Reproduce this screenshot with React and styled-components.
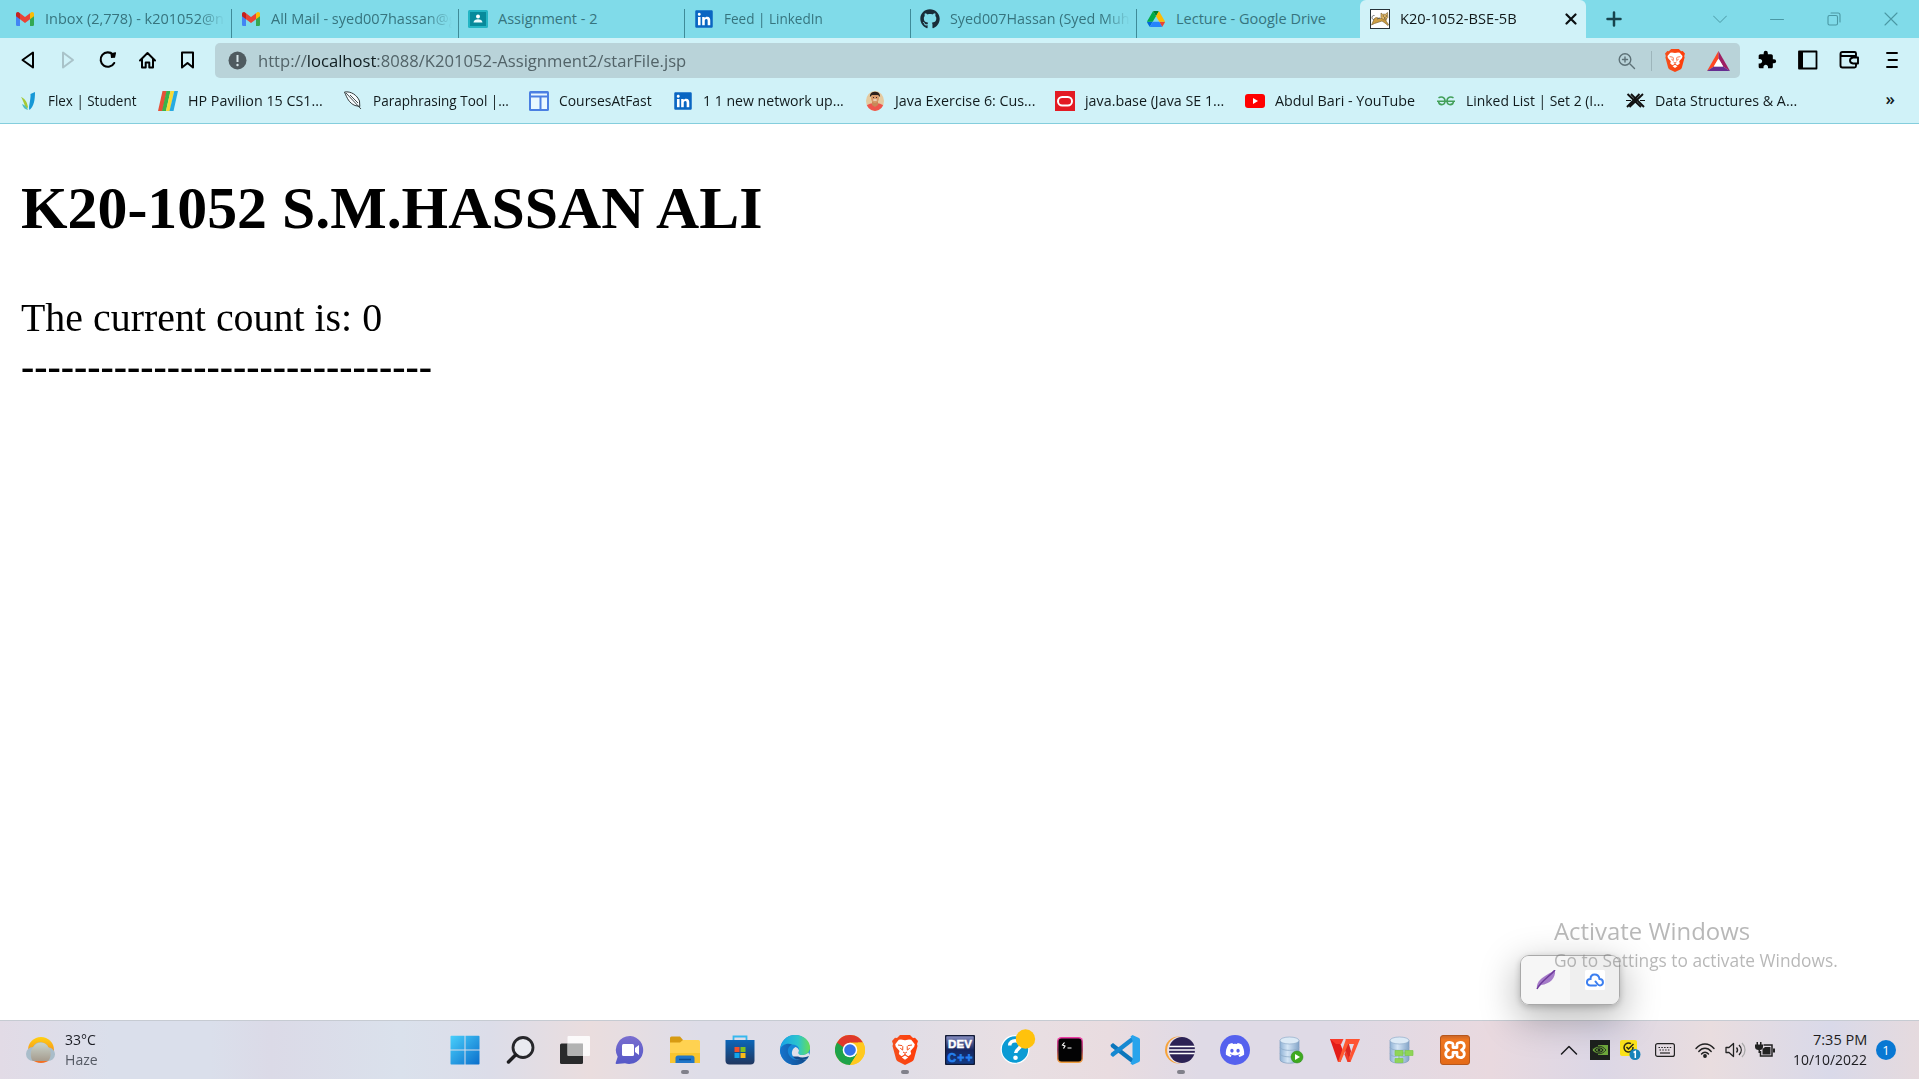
import React, { useLayoutEffect, useRef, useState } from 'react';
import styled, { createGlobalStyle } from 'styled-components';
import { FaGithub, FaLinkedin, FaDiscord } from 'react-icons/fa';
import { MdExtension } from 'react-icons/md';

const Global = createGlobalStyle`
  * { box-sizing: border-box; }
  body { margin: 0; background: #fff; overflow: hidden; }
  svg { display: block; flex: none; }
`;

const Screen = styled.div`
  width: 1919px;
  height: 1079px;
  display: flex;
  flex-direction: column;
  position: relative;
  font-family: "Open Sans", "Noto Sans", sans-serif;
  overflow: hidden;
`;

/* ---------- text condensed to a set width ---------- */
const FitBox = styled.span`
  display: block;
  width: ${(p) => p.$w}px;
  white-space: pre;
`;
const FitText = styled.span`
  display: inline-block;
  transform-origin: 0 50%;
`;

function Fit({ w, children }) {
  const ref = useRef(null);
  const [scale, setScale] = useState(1);
  useLayoutEffect(() => {
    setScale(w / ref.current.offsetWidth);
  }, [w]);
  return <FitBox $w={w}><FitText ref={ref} style={{ transform: `scaleX(${scale})` }}>{children}</FitText></FitBox>;
}

/* ---------- tab strip ---------- */
const TabStrip = styled.div`
  height: 38px;
  flex: none;
  display: flex;
  background: #80dbe9;
  padding-left: 5px;
`;
const Tab = styled.div`
  width: ${(p) => p.$w || 226}px;
  height: 38px;
  display: flex;
  align-items: center;
  padding: 0 ${(p) => (p.$active ? 9 : 4)}px 0 10px;
  background: ${(p) => (p.$active ? '#d0f2f8' : 'transparent')};
  border-radius: ${(p) => (p.$active ? '6px 6px 0 0' : 0)};
  color: ${(p) => (p.$active ? '#101718' : '#36747e')};
  font-size: 14.5px;
  line-height: 20px;
`;
const TabIcon = styled.div`
  width: 20px;
  margin-right: 10px;
  display: flex;
  justify-content: center;
  flex: none;
`;
const TabTitle = styled.div`
  flex: 1;
  overflow: hidden;
  ${(p) => p.$fade && 'mask-image: linear-gradient(90deg, #000 calc(100% - 28px), transparent calc(100% - 2px));'}
`;
const TabRule = styled.div`
  width: 1px;
  height: 29px;
  align-self: flex-end;
  background: #3f8b98;
  margin-right: -1px;
`;
const WindowControls = styled.div`
  display: flex;
  align-items: center;
  flex: 1;
  padding: 0 21px 1px 20px;
  color: #4a98a4;
  justify-content: space-between;
`;
const ControlGroup = styled.div`
  display: flex;
  align-items: center;
  gap: 43px;
`;

/* ---------- toolbar ---------- */
const Toolbar = styled.div`
  height: 43px;
  flex: none;
  display: flex;
  align-items: center;
  background: #d0f2f8;
  padding: 2px 17px 0 18px;
`;
const NavButtons = styled.div`
  display: flex;
  gap: 20px;
  width: 197px;
  padding-bottom: 1px;
`;
const AddressBar = styled.div`
  width: 1525px;
  height: 35px;
  border-radius: 5px;
  background: #b9d3d9;
  display: flex;
  align-items: center;
  padding: 0 10px 0 13px;
  color: #526368;
  font-size: 17px;
`;
const Url = styled.div`
  flex: 1;
  padding-left: 11px;
  b { font-weight: 400; color: #101d20; }
`;
const BarRule = styled.div`
  width: 1px;
  height: 20px;
  background: #9db5bb;
  margin: 0 13px 0 15px;
`;
const Extensions = styled.div`
  display: flex;
  align-items: center;
  flex: 1;
  gap: 21px;
  padding: 0 0 1px 17px;
`;

/* ---------- bookmarks ---------- */
const Bookmarks = styled.div`
  height: 43px;
  flex: none;
  display: flex;
  align-items: center;
  background: #d0f2f8;
  border-bottom: 1px solid #84cedd;
  padding: 0 24px 3px 18px;
  color: #111b1d;
  font-size: 14.5px;
`;
const Bookmark = styled.div`
  width: ${(p) => p.$w}px;
  display: flex;
  align-items: center;
  gap: 10px;
`;
const BookmarkIcon = styled.div`
  width: 20px;
  display: flex;
  justify-content: center;
  flex: none;
`;
const More = styled.div`
  margin-left: auto;
  font-size: 17px;
  font-weight: 600;
  line-height: 18px;
  padding-bottom: 3px;
`;

/* ---------- page ---------- */
const Page = styled.main`
  flex: 1;
  padding: 0 21px;
  font-family: "Liberation Serif", "Times New Roman", serif;
  font-size: 40px;
  line-height: 49px;
  color: #000;
`;
const Heading = styled.h2`
  font-size: 60px;
  line-height: 70px;
  margin: 49px 0 50px;
`;
const Line = styled.div`
  font-weight: ${(p) => (p.$bold ? 700 : 400)};
`;
const Popup = styled.div`
  position: absolute;
  left: 1520px;
  top: 955px;
  width: 100px;
  height: 50px;
  display: flex;
  border: 1px solid #a9a9a9;
  border-radius: 9px;
  overflow: hidden;
  background: #efefef;
`;
const PopupShadow = styled.div`
  position: absolute;
  left: 1520px;
  top: 955px;
  width: 100px;
  height: 50px;
  border-radius: 9px;
  box-shadow: 0 12px 36px 4px rgba(0, 0, 0, 0.26), 0 2px 6px rgba(0, 0, 0, 0.2);
`;
const PopupCell = styled.div`
  flex: 1;
  display: flex;
  align-items: center;
  justify-content: center;
  background: ${(p) => (p.$light ? '#f6f6f6' : '#efefef')};
`;
const Watermark = styled.div`
  position: absolute;
  left: 1554px;
  top: 914px;
  color: rgba(125, 125, 125, 0.55);
  display: flex;
  flex-direction: column;
`;
const WatermarkTitle = styled.div`
  font-size: 24.5px;
  line-height: 34px;
`;
const WatermarkNote = styled.div`
  font-size: 17.5px;
  line-height: 26px;
  margin-top: -1px;
`;

/* ---------- taskbar ---------- */
const Taskbar = styled.footer`
  height: 59px;
  flex: none;
  display: flex;
  align-items: center;
  border-top: 1px solid #c6cbd2;
  background: linear-gradient(90deg, #e2dbe6 0, #dadfeb 110px, #dadfeb 210px, #dbdae7 270px, #dae1ec 400px,
    #dcdde9 490px, #eaddde 590px, #dedde8 700px, #dfdde7 880px, #e8dfe3 1010px, #e9dce0 1110px,
    #dfdae6 1200px, #dfdae6 1330px, #e9d9df 1490px, #dcd7e6 1600px, #e9dddf 1710px, #d9d9e9 1830px, #e5dade 1919px);
`;
const Weather = styled.div`
  width: 437px;
  padding-left: 26px;
  display: flex;
  align-items: center;
  gap: 10px;
  font-size: 14.5px;
  line-height: 20px;
  color: #1b1d24;
`;
const Stack = styled.div`
  display: flex;
  flex-direction: column;
  align-items: ${(p) => (p.$end ? 'flex-end' : 'flex-start')};
`;
const Muted = styled.span`
  color: #555a64;
`;
const Apps = styled.div`
  display: flex;
  height: 58px;
`;
const AppSlot = styled.div`
  width: 55.05px;
  display: flex;
  align-items: center;
  justify-content: center;
  position: relative;
`;
const Running = styled.span`
  position: absolute;
  left: 24px;
  bottom: 5px;
  width: 8px;
  height: 4px;
  border-radius: 2px;
  background: #80808a;
`;
const Tray = styled.div`
  flex: 1;
  display: flex;
  align-items: center;
  padding: 0 23px 0 77px;
  font-size: 14.5px;
  line-height: 20px;
  color: #1c1c20;
`;
const TrayIcons = styled.div`
  display: grid;
  grid-template-columns: 30px 30px 35px 40px 30px 30px 20px;
  align-items: center;
  width: 215px;
`;
const Clock = styled.div`
  flex: 1;
  display: flex;
  justify-content: flex-end;
  margin-right: 9px;
`;
const Badge = styled.div`
  width: 20px;
  height: 20px;
  border-radius: 50%;
  background: #0878d3;
  color: #fff;
  font-size: 13px;
  display: flex;
  align-items: center;
  justify-content: center;
`;

/* ---------- drawings ---------- */
const Gmail = () => (
  <svg width="18" height="14" viewBox="0 0 18 14">
    <path d="M0 2v10.800A1.200 1.200 0 0 0 1.200 14H4V5.500z" fill="#4285f4" />
    <path d="M18 2v10.800a1.200 1.200 0 0 1-1.200 1.200H14V5.500z" fill="#34a853" />
    <path d="M14 1.200 15 .5C16.400 -.4 18 .4 18 2v2.200L14 7.300z" fill="#fbbc04" />
    <path d="M4 1.200 9 5l5-3.800v6.100L9 11 4 7.300z" fill="#ea4335" />
    <path d="M0 2C0 .4 1.600-.4 3 .5l1 .7v6.100L0 4.200z" fill="#c5221f" />
  </svg>
);
const Classroom = () => (
  <svg width="20" height="18" viewBox="0 0 20 18">
    <rect width="20" height="18" rx="1.500" fill="#23b5c4" />
    <rect x="2" y="2" width="16" height="14" fill="#078a9b" />
    <circle cx="10" cy="6.500" r="2" fill="#fff" />
    <path d="M5.500 12.500c0-4.500 9-4.500 9 0z" fill="#e8fbfd" />
  </svg>
);
const InBox = styled.div`
  width: 18px;
  height: 18px;
  background: linear-gradient(#fff, #fff) center / 13px 13px no-repeat;
  svg { width: 20px; height: 20px; margin: -1px; color: #0a66c2; }
`;
const LinkedIn = () => <InBox><FaLinkedin /></InBox>;
const Drive = () => (
  <svg width="18" height="16" viewBox="0 0 87.300 78">
    <path d="m6.600 66.850 3.850 6.650c.8 1.400 1.950 2.500 3.300 3.300l13.750-23.800H0c0 1.550.4 3.100 1.200 4.500z" fill="#0066da" />
    <path d="M43.650 25 29.900 1.200c-1.350.8-2.500 1.900-3.300 3.300L1.200 48.500A9 9 0 0 0 0 53h27.500z" fill="#00ac47" />
    <path d="M73.550 76.800c1.350-.8 2.500-1.900 3.300-3.300l9.250-16c.8-1.400 1.200-2.950 1.200-4.500H59.800l5.850 11.500z" fill="#ea4335" />
    <path d="M43.650 25 57.400 1.200C56.050.4 54.500 0 52.900 0H34.400c-1.600 0-3.150.45-4.500 1.200z" fill="#00832d" />
    <path d="M59.800 53H27.500L13.750 76.800c1.350.8 2.900 1.200 4.500 1.200h50.800c1.600 0 3.150-.45 4.500-1.200z" fill="#2684fc" />
    <path d="M73.400 26.500 60.700 4.500c-.8-1.400-1.950-2.500-3.300-3.300L43.650 25 59.800 53h27.450c0-1.550-.4-3.100-1.200-4.500z" fill="#ffba00" />
  </svg>
);
const Tomcat = () => (
  <svg width="20" height="20" viewBox="0 0 20 20">
    <rect x=".5" y=".5" width="19" height="19" fill="#fff" stroke="#273238" />
    <path d="M8 9c-2-1-4 0-4.500 2.500L1.500 16l3-1.500L9 13l3-1 3 2 3 2.500.5-1-2.500-3.500.5-3-6 .5z" fill="#cf9f43" stroke="#70582a" strokeWidth=".6" />
    <path d="m11 4 1.500 1.200h3L17.500 3.500l.3 5-2.300 2.300h-2.300L11 8.500z" fill="#e0b765" stroke="#70582a" strokeWidth=".6" />
    <path d="M4 11C1 10 1.500 6 4.500 6.500M10 9l-3 1" stroke="#555" strokeWidth=".8" fill="none" />
    <path d="M12.800 7h1m2 0h1m-2.800 2h1.500" stroke="#222" strokeWidth=".9" />
  </svg>
);
const Lines = ({ d, w = 20, h = 20, s = 2, c = 'currentColor', fill = 'none', children }) => (
  <svg width={w} height={h} viewBox={`0 0 ${w} ${h}`} fill={fill} stroke={c} strokeWidth={s} strokeLinecap="round" strokeLinejoin="round">
    <path d={d} />
    {children}
  </svg>
);
const Reload = () => (
  <svg width="20" height="20" viewBox="0 0 20 20">
    <path d="M15 4.500A7.200 7.200 0 1 0 16.200 13" fill="none" stroke="#000" strokeWidth="2.100" strokeLinecap="round" />
    <path d="M12.500 3.500 17 2.300c.8-.1 1.200.4 1 1L17 7.800l-4 .2z" fill="#000" />
  </svg>
);
const BraveLion = ({ w = 20, h = 23 }) => (
  <svg width={w} height={h} viewBox="0 0 26 30">
    <defs>
      <linearGradient id="lion"><stop stopColor="#f4501e" /><stop offset="1" stopColor="#ff3c08" /></linearGradient>
    </defs>
    <path d="M8 0h10l3 3 2-.3L26 6l-1 3 .5 2-3.500 13c-.4 1.200-1 2-2 2.600L13 30l-7-3.400c-1-.6-1.600-1.400-2-2.600L.5 11 1 9 0 6l3-3.300L5 3z" fill="url(#lion)" />
    <path d="M9 4.500 13 5.300l4-.8 2.200.3 3.600 4.400-.6 2.500-3.700 4.300.7 3-2.700 2.300-1.500-.8-2-1.500-2 1.500-1.500.8-2.700-2.300.7-3-3.700-4.300-.6-2.500 3.600-4.400z" fill="#fff" />
    <path d="m6 10 4 .6.8 1-.1 3.500-2.500-1.900M20 10l-4 .6-.8 1 .1 3.500 2.500-1.900M11 17l2 1.200 2-1.200M13 18.500V20" stroke="#f4501e" strokeWidth="1" fill="none" />
    <path d="m9.800 22.500 3.200-2 3.200 2-3.200 2.200z" fill="#fff" />
  </svg>
);
const Bat = () => (
  <svg width="23" height="20" viewBox="0 0 23 20">
    <path d="M11.500 0 0 20l7-4.500 4.500-8z" fill="#ff4724" />
    <path d="M11.500 0 23 20l-7-4.500-4.500-8z" fill="#9e1f63" />
    <path d="M0 20h23l-7-4.500H7z" fill="#662d91" />
    <path d="m11.500 7.500 4.800 8H6.700z" fill="#fff" />
  </svg>
);
const Flex = () => (
  <svg width="15" height="20" viewBox="0 0 15 20">
    <path d="m9.500 3 4.500-2c0 8-1 14-5.500 18C7 16 10 9 9.500 3z" fill="#1698d6" />
    <path d="M0 6c3 1 6 4 7 10l-1 2C4 16 3 11 0 6z" fill="#a5c935" />
    <path d="M1 13c3 1 5 3 6 6-3-.5-5-2.500-6-6z" fill="#50bec0" />
  </svg>
);
const Hp = () => (
  <svg width="20" height="20" viewBox="0 0 20 20">
    <path d="M4.500 0H9L4.500 20H0z" fill="#e65138" /><path d="M8.500 0h4L8 20H4z" fill="#38b44a" />
    <path d="M12.500 0h3.800l-4.500 20H8z" fill="#f6d936" /><path d="M16.300 0H20l-4.500 20h-4z" fill="#27aae1" />
  </svg>
);
const Quill = () => (
  <svg width="18" height="19" viewBox="0 0 18 19" fill="#f8fdff" stroke="#30393b" strokeWidth="1">
    <path d="M.5 1C7 0 13 4 15.500 10l.3 5.500-4.800-1C5 12 3 7 .5 1z" />
    <path d="m2 2 15 16M6 4l8 8" fill="none" strokeWidth=".9" />
  </svg>
);
const Sites = () => (
  <svg width="20" height="20" viewBox="0 0 20 20">
    <rect width="20" height="20" rx="1.500" fill="#4a7fe2" /><path d="M2 2.500h16v2H2zm0 4h8.500V18H2zm10.500 0H18V18h-5.500z" fill="#e9f8ff" />
  </svg>
);
const Avatar = () => (
  <svg width="18" height="20" viewBox="0 0 18 20">
    <defs><clipPath id="face"><ellipse cx="9" cy="10" rx="9" ry="10" /></clipPath></defs>
    <g clipPath="url(#face)">
      <rect width="18" height="20" fill="#e5ca9f" /><path d="M0 20v-5c4-4 14-4 18 0v5z" fill="#ee554d" />
      <path d="M6 10h6v4l-3 2-3-2z" fill="#c78958" /><ellipse cx="9" cy="7" rx="4" ry="5" fill="#d79a6a" />
      <path d="M4 6C3-1 15-1 14 6l-2-2H6z" fill="#2c211d" />
      <path d="M7 6.500h1m2 0h1" stroke="#422" /><path d="M7.300 9h3.400" stroke="#fff" />
    </g>
  </svg>
);
const Oracle = () => (
  <svg width="20" height="20" viewBox="0 0 20 20"><rect width="20" height="20" fill="#e31b23" /><rect x="3" y="6" width="14" height="8.500" rx="4.200" fill="none" stroke="#fff" strokeWidth="2" /></svg>
);
const YouTube = () => (
  <svg width="20" height="14" viewBox="0 0 20 14"><rect width="20" height="14" rx="3" fill="#f00" /><path d="m8 4 5 3-5 3z" fill="#fff" /></svg>
);
const Geeks = () => (
  <svg width="18" height="10" viewBox="0 0 18 10" fill="none" stroke="#43a05a" strokeWidth="1.600">
    <path d="M0 5.200h18M1.500 1.800C4 .2 8 .8 8 5 7.800 9.800 1.800 9.800 1.500 5.200M16.500 1.800C14 .2 10 .8 10 5c.2 4.800 6.200 4.800 6.500.2" />
  </svg>
);
const CrossMark = () => (
  <svg width="19" height="15" viewBox="0 0 19 15" fill="none" stroke="#111">
    <path d="M1.500 1 15 14M5 1l13 13M17 1 3.500 14M13.500 1 1 14" strokeWidth="1.900" />
    <path d="M0 7.500h5m9 0h5" strokeWidth="1.200" />
  </svg>
);

const Art = ({ children, size = 30 }) => <svg width={size} height={size} viewBox="0 0 30 30">{children}</svg>;

const WindowsLogo = () => (
  <Art>
    <defs><linearGradient id="win" x2="1" y2="1"><stop stopColor="#49cffb" /><stop offset="1" stopColor="#0a6ecb" /></linearGradient></defs>
    <path d="M.5 1.500A.8.800 0 0 1 1.300.7H14.500V14.600H.5zM15.500.7h13.200a.8.800 0 0 1 .8.8v13.100h-14zM.5 15.600h14v14H1.300a.8.800 0 0 1-.8-.8zm15 0h14v13.200a.8.800 0 0 1-.8.800H15.500z" fill="url(#win)" />
  </Art>
);
const SearchGlass = () => (
  <Art>
    <circle cx="18" cy="12.500" r="10" fill="#e9eaf0" stroke="#27272b" strokeWidth="2.800" />
    <path d="m10.500 20-7 7" stroke="#1d1d20" strokeWidth="3.500" strokeLinecap="round" />
  </Art>
);
const TaskView = () => (
  <Art>
    <rect y="8.500" width="23" height="20.500" rx="1.500" fill="#292a2b" />
    <rect x="7.500" y="1" width="22.500" height="20" rx="1" fill="#fff" opacity=".85" />
    <path d="M7.500 8.500H23V21H8.500a1 1 0 0 1-1-1z" fill="#aaa" opacity=".85" />
  </Art>
);
const Chat = () => (
  <Art>
    <defs><linearGradient id="chat" y2="1" x2="0"><stop stopColor="#7a6ecf" /><stop offset="1" stopColor="#5558c7" /></linearGradient></defs>
    <path d="M15.500 1A14 14 0 1 1 10 28.300L1.500 29c-.8 0-1-.6-.8-1.200l2-6A14 14 0 0 1 15.500 1z" fill="url(#chat)" />
    <rect x="7" y="9" width="12" height="12" rx="1.500" fill="#fff" /><path d="m20 13 4-3v10l-4-3z" fill="#fff" />
  </Art>
);
const Folder = () => (
  <Art>
    <path d="M0 3a1.500 1.500 0 0 1 1.500-1.500H10L13 5v5H0z" fill="#d79b12" />
    <path d="M0 7.500h10l3-2.500h15.500A1.500 1.500 0 0 1 30 6.500V28H0z" fill="#ffd251" />
    <path d="M0 18h30v10H0z" fill="#f9c52f" />
    <path d="M5.500 28v-5c0-1.500 1-2.500 2.500-2.500h14c1.500 0 2.500 1 2.500 2.500v5z" fill="#2176c8" /><path d="M9 24.500h12" stroke="#0b4c91" strokeWidth="1.500" />
  </Art>
);
const Store = () => (
  <Art>
    <defs><linearGradient id="store" y2="1" x2="0"><stop stopColor="#0c66b8" /><stop offset="1" stopColor="#20365f" /></linearGradient></defs>
    <path d="M8.500 6V1.500h13V6" fill="none" stroke="#37b8ee" strokeWidth="1.800" />
    <path d="M.5 5h29v20.500a4 4 0 0 1-4 4h-21a4 4 0 0 1-4-4z" fill="url(#store)" />
    <path d="M9.500 12h5v5h-5z" fill="#f1512b" /><path d="M15.500 12h5v5h-5z" fill="#80c021" /><path d="M9.500 18h5v5h-5z" fill="#12a4ea" /><path d="M15.500 18h5v5h-5z" fill="#fcba16" />
  </Art>
);
const Edge = () => (
  <Art>
    <defs>
      <linearGradient id="ea" x2="1"><stop stopColor="#18a4e8" /><stop offset=".6" stopColor="#2cc5cc" /><stop offset="1" stopColor="#67dd55" /></linearGradient>
      <linearGradient id="eb" x2="1"><stop stopColor="#1674cd" /><stop offset="1" stopColor="#114a8b" /></linearGradient>
    </defs>
    <circle cx="15" cy="15" r="15" fill="#1687d8" />
    <path d="M.4 12.500C2.500 4 8 0 15 0c9 0 15 6 15 12.500 0 5-4 7.500-8 7.500-3.500 0-4.500-1.500-3.500-3 2-3.500-1-7.500-6-7.500-5 0-9.500 1.500-12.100 3z" fill="url(#ea)" />
    <path d="M0 15.500C1 10 7 7.500 12 9.500c-4 2-5 6-3.500 9.500C11 25 19 27 27.500 23 24 28.500 18 31 12 29.700 5 28 .5 22 0 15.500z" fill="url(#eb)" />
    <path d="M19 16c-1.500 2-.5 4 3 4 2 0 4.500-.5 6.500-2.500l1 3-2 3c-6 3-13 1-15-3-1.500-3 0-7 3-8.500 2.500 1 3.500 2.500 3.500 4z" fill="#dfe0e9" />
    <path d="M12.600 21.500c3 4 9 4.500 14.900 2L29 21c-3 1.500-8 2-11 .5z" fill="#114a8b" />
  </Art>
);
const Chrome = () => (
  <Art>
    <circle cx="15" cy="15" r="15" fill="#ffc91f" />
    <path d="M2 7.500A15 15 0 0 0 15 30l7-11-7-4z" fill="#1ea34a" />
    <path d="M2 7.500 9 19l6-4-2-7.500z" fill="#1ea34a" /><path d="M2 7.500A15 15 0 0 1 28 7.500H15L8 12z" fill="#df392b" />
    <path d="m15 30 7-11 1-11.500h5A15 15 0 0 1 15 30z" fill="#ffc91f" />
    <circle cx="15" cy="15" r="7.300" fill="#fff" /><circle cx="15" cy="15" r="5.800" fill="#3472e9" />
  </Art>
);
const DevCpp = () => (
  <Art>
    <defs><linearGradient id="dev" y2="1" x2="0"><stop stopColor="#8a91c4" /><stop offset=".5" stopColor="#15255f" /><stop offset="1" stopColor="#123d88" /></linearGradient></defs>
    <rect x=".5" y=".5" width="29" height="29" rx="1.500" fill="url(#dev)" stroke="#111a36" strokeWidth="1.500" />
    <text x="15" y="12.500" textAnchor="middle" fontFamily="Liberation Sans, sans-serif" fontSize="11.500" fontWeight="700" fill="#fff" stroke="#fff" strokeWidth=".4" textLength="24">DEV</text>
    <text x="15" y="26.500" textAnchor="middle" fontFamily="Liberation Sans, sans-serif" fontSize="12" fontWeight="700" fill="#2580f0" stroke="#2580f0" strokeWidth=".6" textLength="25">C++</text>
  </Art>
);
const HelpWrap = styled.div`
  margin: -6px 0 0 6px;
`;
const Help = () => (
  <HelpWrap>
    <svg width="36" height="36" viewBox="0 0 36 36">
      <circle cx="15" cy="20.500" r="13.800" fill="#0b9bd4" stroke="#fff" strokeWidth="1.200" />
      <path d="M9.700 16.500c0-6.500 11-6 11-.5 0 4-5 4-5 8" fill="none" stroke="#fff" strokeWidth="3.500" /><circle cx="15.500" cy="28.700" r="2.300" fill="#fff" />
      <circle cx="25.500" cy="10" r="9.700" fill="#ffc20c" />
    </svg>
  </HelpWrap>
);
const Terminal = () => (
  <Art>
    <defs><linearGradient id="term" y2="1" x2="0"><stop stopColor="#f13aa8" /><stop offset=".5" stopColor="#a44667" /><stop offset="1" stopColor="#f3a23c" /></linearGradient></defs>
    <rect x="2" y="2" width="26" height="26" rx="4.500" fill="url(#term)" /><rect x="3.500" y="3.500" width="23" height="23" rx="3" fill="#030304" />
    <path d="M9.500 7.500 7.500 10l2.500 1-1.500 2.500M12.500 13h4" fill="none" stroke="#fff" strokeWidth="1.200" />
  </Art>
);
const Code = () => (
  <Art>
    <path d="M.5 10 3 8l20 15.500V29L1 12z" fill="#0b76bc" /><path d="M.5 20 3 22 23 6.500V1L1 18z" fill="#1689d2" />
    <path d="m22.500 0 6.500 3c.7.400 1 1 1 1.700v20.600c0 .7-.3 1.300-1 1.700l-6.500 3-2-1.500 2-4V5.500l-2-4z" fill="#29a4ec" />
  </Art>
);
const Eclipse = () => (
  <Art>
    <circle cx="13.500" cy="15" r="13.500" fill="#f6a33b" /><circle cx="15.700" cy="15" r="13.600" fill="#e9e1e8" /><circle cx="17" cy="15" r="13" fill="#2c2255" />
    <path d="M4.200 11.500h25.600M3.800 15h26.400M4.200 18.500h25.600" stroke="#fff" strokeWidth="1.500" />
  </Art>
);
const DiscordDisc = styled.div`
  width: 30px;
  height: 30px;
  border-radius: 50%;
  background: #5561ee;
  display: flex;
  align-items: center;
  justify-content: center;
  color: #fff;
`;
const Database = ({ play }) => (
  <Art>
    <defs><linearGradient id="db"><stop stopColor="#8fb2d5" /><stop offset=".4" stopColor="#d4e5f5" /><stop offset="1" stopColor="#83a5c9" /></linearGradient></defs>
    <path d="M5 5.500v19c0 5 19 5 19 0v-19z" fill="url(#db)" stroke="#829fbe" strokeWidth=".7" /><ellipse cx="14.500" cy="5.500" rx="9.500" ry="3.500" fill="#dceaf6" stroke="#8facca" strokeWidth=".7" />
    <path d="M5 12c0 4.500 19 4.500 19 0M5 18.500c0 4.500 19 4.500 19 0" fill="none" stroke="#8eabc8" strokeWidth=".8" />
    {play ? <><circle cx="22" cy="22" r="6" fill="#3eaa20" stroke="#2a8618" strokeWidth=".5" /><path d="m20 19 5 3-5 3z" fill="#fff" /></>
      : <path d="M10 15.500h8v5h-8zM20 15.500h8v5h-8zM10 23.500h8v4h-8zM14 20v4M17 18h4" fill="#8fd557" stroke="#7cc84a" strokeWidth=".7" />}
  </Art>
);
const Wps = () => (
  <Art>
    <path d="M0 4h8.500l5 13-3 10H8z" fill="#e31d19" />
    <path d="M17.500 4 14 13l5 12.500 2-9.500z" fill="#dc261f" />
    <path d="M0 4h13.500l-2.300 5H6z" fill="#f8392a" />
    <path d="M16 4h4.500l-10 23H8z" fill="#ff5a31" />
    <path d="M15.500 4H30l-9.500 23h-3L24 9h-6z" fill="#ff5331" />
    <path d="M17.500 27h3l-4.500-11-1.500 3.500z" fill="#ef3a29" />
  </Art>
);
const Xampp = () => (
  <Art>
    <defs><linearGradient id="xa" y2="1" x2="0"><stop stopColor="#c96528" /><stop offset=".15" stopColor="#ee7620" /><stop offset="1" stopColor="#e56a17" /></linearGradient></defs>
    <rect x=".5" y=".5" width="29" height="29" rx="2.500" fill="url(#xa)" stroke="#b7571c" />
    <path d="M12 8c-7-2.500-8 4.500-3.500 7C4 17.500 5 24.500 12 22c1.500-.5 1-3 1-4.500h4c0 1.500-.5 4 1 4.500 7 2.500 8-4.500 3.500-7C26 12.500 25 5.500 18 8c-1.500.5-1 3-1 4.500h-4c0-1.500.5-4-1-4.500z" fill="none" stroke="#fff" strokeWidth="2.800" strokeLinejoin="round" />
  </Art>
);
const Sun = () => (
  <svg width="29" height="27" viewBox="0 0 29 27">
    <defs>
      <linearGradient id="sun" x2="0" y2="1"><stop stopColor="#ffd011" /><stop offset="1" stopColor="#f26a22" /></linearGradient>
      <linearGradient id="cloud" x2="0" y2="1"><stop stopColor="#c9d4cc" /><stop offset="1" stopColor="#a69c8e" /></linearGradient>
    </defs>
    <circle cx="15" cy="13" r="13" fill="url(#sun)" />
    <path d="M7 24a7 7 0 0 1 0-14 8.500 8.500 0 0 1 15.500.5A6.700 6.700 0 0 1 22 24z" fill="#a9bdca" />
    <path d="M7 24c-3-2-3-12 .5-14a8.500 8.500 0 0 1 15 .5C26 14 25 22 22 24z" fill="url(#cloud)" />
  </svg>
);
const Nvidia = () => (
  <svg width="20" height="20" viewBox="0 0 20 20"><rect width="20" height="20" fill="#1d211d" /><path d="M8 5h10v10H8z" fill="#6fa93b" /><path d="M2 10c4-5 10-5 14 0-4 5-10 5-14 0z" fill="#6fa93b" stroke="#1d211d" strokeWidth=".8" /><path d="M5 10c2-3 6-3 8 0-2 3-6 3-8 0z" fill="none" stroke="#1d211d" strokeWidth="1.200" /><circle cx="9" cy="10" r="1.500" fill="#1d211d" /></svg>
);
const Norton = () => (
  <svg width="21" height="20" viewBox="0 0 21 20"><rect width="17" height="16" rx="2" fill="#fbe21b" /><path d="M13 7a4.500 4.500 0 1 1-2-3.300M6.500 7l2 2 5-5" fill="none" stroke="#2b2a18" strokeWidth="1.500" /><circle cx="15" cy="14.500" r="5.500" fill="#1683b9" /><path d="m13.500 12.500 1.800-1v6.500" fill="none" stroke="#fff" strokeWidth="1.500" /></svg>
);
const Keyboard = () => (
  <svg width="20" height="14" viewBox="0 0 20 14" fill="none" stroke="#222" strokeWidth="1.200"><rect x=".6" y=".6" width="18.800" height="12.800" rx="2" /><path d="M3.500 4.500h13" strokeDasharray="1.500 1.300" /><path d="M4.500 7h11" strokeDasharray="1.500 1.300" /><path d="M5 10h10" /></svg>
);
const Wifi = () => (
  <svg width="20" height="15" viewBox="0 0 20 15" fill="none" stroke="#222" strokeWidth="1.400" strokeLinecap="round"><path d="M1 5.500c5-6 13-6 18 0M3.800 8.500c3.500-4.300 8.900-4.300 12.400 0M6.500 11c2-2.400 5-2.400 7 0" /><circle cx="10" cy="13" r="1.200" fill="#222" /></svg>
);
const Volume = () => (
  <svg width="21" height="16" viewBox="0 0 21 16" fill="none" stroke="#222" strokeWidth="1.300" strokeLinejoin="round"><path d="M1 5.500h3l4.500-4v13L4 10.500H1zM11.500 5.500c1.300 1.500 1.300 3.500 0 5M14 3c3 3 3 7 0 10" /><path d="M17 1c4 4 4 10 0 14" stroke="#aaa" /></svg>
);
const Battery = () => (
  <svg width="21" height="16" viewBox="0 0 21 16"><path d="M8.500 3H17v11H5.500V9" fill="none" stroke="#222" strokeWidth="1.500" /><path d="M7.500 7 10 5h5.500v7.500H7.500zM18 6.500h2v4h-2zM0 2.500h8V5c0 2-1.500 3-3 3v3H3.500V8C1.500 8 0 7 0 5zM1.500 0H3v3H1.500zM5 0h1.500v3H5z" fill="#222" /></svg>
);
const Spacer = styled.div`
  width: 22px;
`;

/* ---------- content data ---------- */
const tabs = [
  { icon: <Gmail />, title: 'Inbox (2,778) - k201052@nu', w: 188, fade: true },
  { icon: <Gmail />, title: 'All Mail - syed007hassan@g', w: 186, fade: true, slot: 227 },
  { icon: <Classroom />, title: 'Assignment - 2', w: 100 },
  { icon: <LinkedIn />, title: 'Feed | LinkedIn', w: 99 },
  { icon: <FaGithub size={20} color="#192c38" />, title: 'Syed007Hassan (Syed Muha', w: 188, fade: true },
  { icon: <Drive />, title: 'Lecture - Google Drive', w: 150, slot: 224 },
];
const bookmarks = [
  [<Flex />, 'Flex | Student', 88, 140], [<Hp />, 'HP Pavilion 15 CS1...', 135, 185], [<Quill />, 'Paraphrasing Tool |...', 136, 186],
  [<Sites />, 'CoursesAtFast', 93, 144], [<LinkedIn />, '1 1 new network up...', 141, 192], [<Avatar />, 'Java Exercise 6: Cus...', 140, 190],
  [<Oracle />, 'java.base (Java SE 1...', 139, 190], [<YouTube />, 'Abdul Bari - YouTube', 140, 191],
  [<Geeks />, 'Linked List | Set 2 (I...', 138, 189], [<CrossMark />, 'Data Structures & A...', 142, 190],
];
const apps = [
  [<WindowsLogo />], [<SearchGlass />], [<TaskView />], [<Chat />], [<Folder />, true], [<Store />], [<Edge />], [<Chrome />],
  [<BraveLion w={26} h={30} />, true], [<DevCpp />], [<Help />], [<Terminal />], [<Code />], [<Eclipse />, true],
  [<DiscordDisc><FaDiscord size={20} /></DiscordDisc>], [<Database play />], [<Wps />], [<Database />], [<Xampp />],
];

export default function App() {
  return (
    <Screen>
      <Global />
      <TabStrip>
        {tabs.map((t, i) => (
          <React.Fragment key={t.title}>
            <Tab $w={t.slot}>
              <TabIcon>{t.icon}</TabIcon>
              <TabTitle $fade={t.fade}><Fit w={t.w}>{t.title}</Fit></TabTitle>
            </Tab>
            {i < tabs.length - 1 && <TabRule />}
          </React.Fragment>
        ))}
        <Tab $active>
          <TabIcon><Tomcat /></TabIcon>
          <TabTitle><Fit w={117}>K20-1052-BSE-5B</Fit></TabTitle>
          <Lines w={12} h={12} s={2.200} c="#0b1012" d="M1.500 1.500l9 9M10.500 1.500l-9 9" />
        </Tab>
        <WindowControls>
          <Lines w={16} h={16} s={2.500} c="#17434c" d="M8 1.500v13M1.500 8h13" />
          <ControlGroup>
            <Lines w={14} h={14} s={1} d="M.5 4l6.500 6.500L13.500 4" />
            <Lines w={14} h={14} s={1} d="M.5 7.500h13" />
            <Lines w={14} h={14} s={1.100} d="M2.500 3.500h6.500q1.500 0 1.500 1.500v6.500q0 1.500-1.500 1.500h-6.500q-1.500 0-1.500-1.500v-6.500q0-1.500 1.500-1.500M4 1h7q2 0 2 2v7" />
            <Lines w={14} h={14} s={1.100} d="M1 1l12 12M13 1L1 13" />
          </ControlGroup>
        </WindowControls>
      </TabStrip>

      <Toolbar>
        <NavButtons>
          <Lines d="M15 2.500v15L4.500 10z" />
          <Lines c="#a9c3c9" d="M5 2.500v15L15 10z" />
          <Reload />
          <Lines d="M2 10.500 9.500 3l7.500 7.500M4 9v8.500h3.700v-5h3.600v5H15V9" />
          <Lines d="M4 2.500h11v15L9.500 13 4 17.500z" />
        </NavButtons>
        <AddressBar>
          <svg width="19" height="19" viewBox="0 0 19 19"><circle cx="9.500" cy="9.500" r="9" fill="#4f5b60" /><path d="M9.500 4v7" stroke="#d7e6ea" strokeWidth="2" /><circle cx="9.500" cy="14" r="1.200" fill="#d7e6ea" /></svg>
          <Url><Fit w={428}>http://<b>localhost</b>:8088/K201052-Assignment2/starFile.jsp</Fit></Url>
          <Lines w={18} h={18} s={1.400} c="#5d7177" d="M12 12l4.500 4.500M4.500 7.500h5M7 5v5"><circle cx="7" cy="7.500" r="5.800" /></Lines>
          <BarRule />
          <BraveLion />
          <Spacer />
          <Bat />
        </AddressBar>
        <Extensions>
          <MdExtension size={20} />
          <Lines s={1.800} d="M1 1.500h17.500v17H1z"><path d="M3 2v16" strokeWidth="4" strokeLinecap="butt" /></Lines>
          <Lines s={1.900} d="M17 6V3.500q0-1.500-1.500-1.500h-12Q1.500 2 1.500 4v11.500q0 2 2 2h12q1.500 0 1.500-1.500v-2M1.500 4q0 2 2 2H17M19 7.500v6h-5q-3-.5-3-3t3-3z" />
          <Lines h={18} s={1.900} d="M7 2h10M8.500 9h8.500M7 16h10" />
        </Extensions>
      </Toolbar>

      <Bookmarks>
        {bookmarks.map(([icon, text, w, slot]) => (
          <Bookmark key={text} $w={slot}>
            <BookmarkIcon>{icon}</BookmarkIcon>
            <Fit w={w}>{text}</Fit>
          </Bookmark>
        ))}
        <More>»</More>
      </Bookmarks>

      <Page>
        <Heading><Fit w={741}>K20-1052 S.M.HASSAN ALI</Fit></Heading>
        <Line><Fit w={361}>The current count is: 0</Fit></Line>
        <Line $bold><Fit w={411}>-------------------------------</Fit></Line>
      </Page>

      <PopupShadow />
      <Taskbar>
        <Weather>
          <Sun />
          <Stack>
            <Fit w={31}>33°C</Fit>
            <Muted><Fit w={33}>Haze</Fit></Muted>
          </Stack>
        </Weather>
        <Apps>
          {apps.map(([icon, running], i) => (
            <AppSlot key={i}>{icon}{running && <Running />}</AppSlot>
          ))}
        </Apps>
        <Tray>
          <TrayIcons>
            <Lines w={18} h={12} s={1.500} d="M1.500 10L9 2.500l7.500 7.500" />
            <Nvidia /><Norton /><Keyboard /><Wifi /><Volume /><Battery />
          </TrayIcons>
          <Clock>
            <Stack $end>
              <Fit w={54}>7:35 PM</Fit>
              <Fit w={74}>10/10/2022</Fit>
            </Stack>
          </Clock>
          <Badge>1</Badge>
        </Tray>
      </Taskbar>

      <Popup>
        <PopupCell $light>
          <svg width="20" height="20" viewBox="0 0 20 20"><path d="M1 19C0 9 10 6 19 0c1 8-5 14-14 15z" fill="#a57bc8" /><path d="M1 19C5 11 12 8 19 0" stroke="#6e3a9c" strokeWidth="1.500" fill="none" /></svg>
        </PopupCell>
        <PopupCell>
          <svg width="20" height="20" viewBox="0 0 20 20"><rect width="20" height="20" rx="1.500" fill="#fff" /><path d="M11 15.500H5.500c-5 0-4.500-6.500 0-6.500 0-6 8-6 9 0 4.500 0 4.500 6.500.5 6.500-2.500 0-2.500-2-4.500-4" fill="none" stroke="#3c7ff0" strokeWidth="2" strokeLinecap="round" /></svg>
        </PopupCell>
      </Popup>
      <Watermark>
        <WatermarkTitle><Fit w={196}>Activate Windows</Fit></WatermarkTitle>
        <WatermarkNote><Fit w={284}>Go to Settings to activate Windows.</Fit></WatermarkNote>
      </Watermark>
    </Screen>
  );
}
